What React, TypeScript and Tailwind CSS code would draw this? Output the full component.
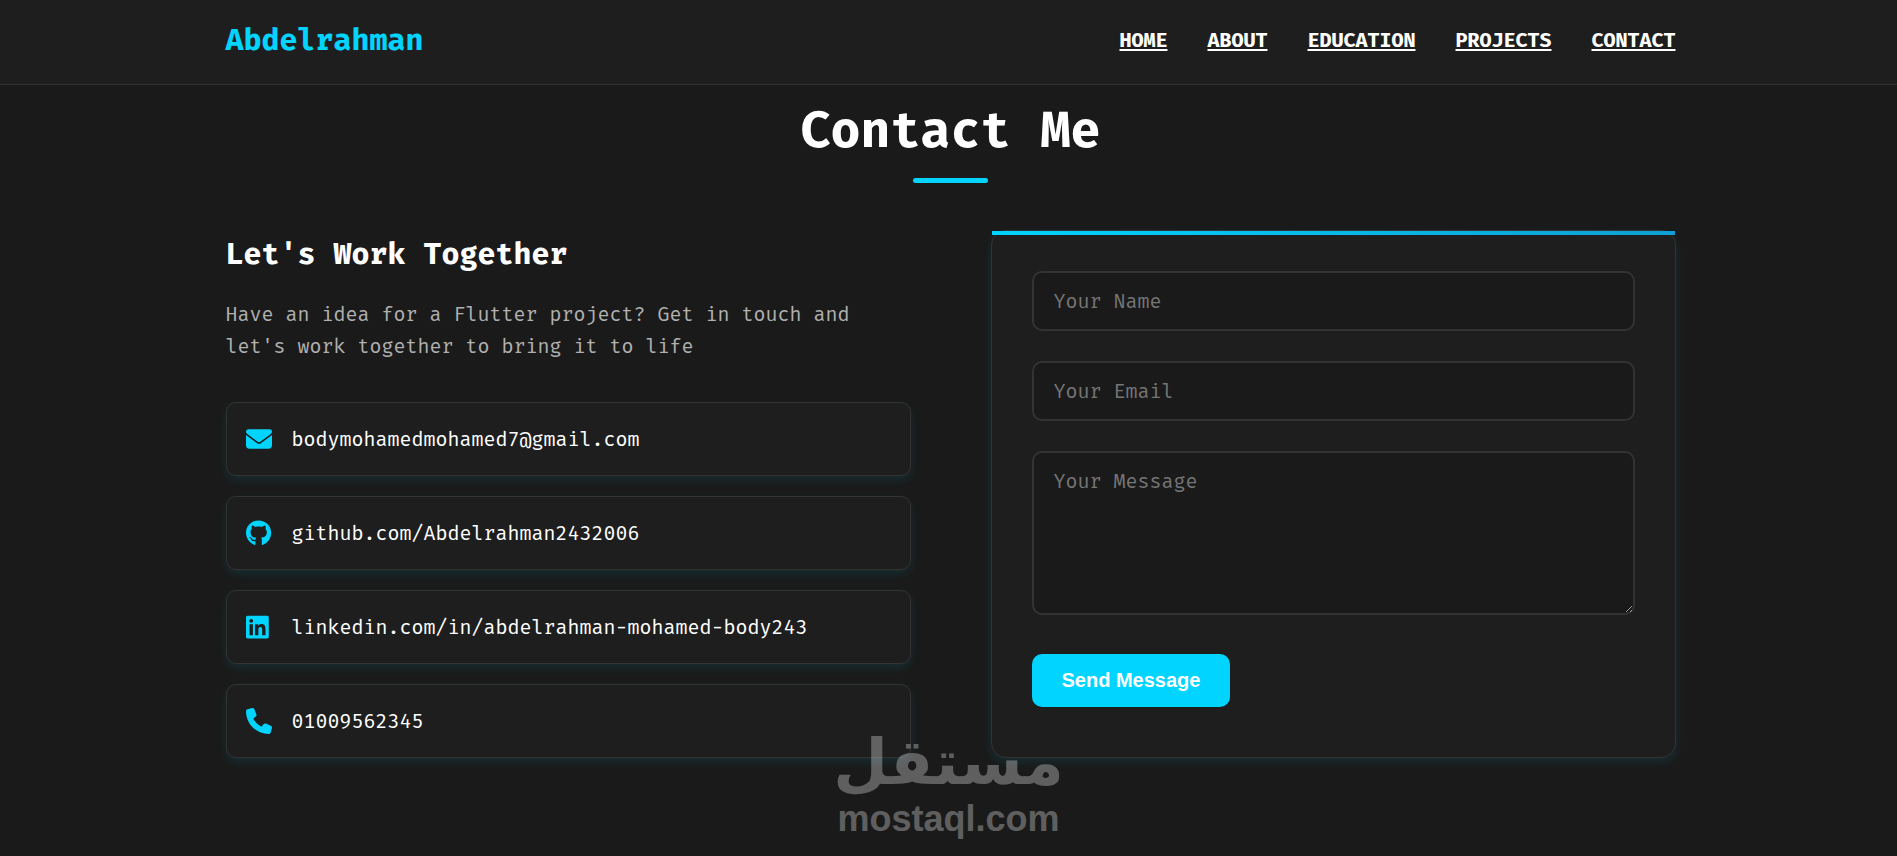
import { FaEnvelope, FaGithub, FaLinkedin, FaPhone } from "react-icons/fa6";

const navLinks = [
  { label: "HOME", href: "#home" },
  { label: "ABOUT", href: "#about" },
  { label: "EDUCATION", href: "#education" },
  { label: "PROJECTS", href: "#projects" },
  { label: "CONTACT", href: "#contact" },
];

const contacts = [
  { icon: FaEnvelope, label: "bodymohamedmohamed7@gmail.com", href: "mailto:bodymohamedmohamed7@gmail.com" },
  { icon: FaGithub, label: "github.com/Abdelrahman2432006", href: "https://github.com/Abdelrahman2432006" },
  { icon: FaLinkedin, label: "linkedin.com/in/abdelrahman-mohamed-body243", href: "https://linkedin.com/in/abdelrahman-mohamed-body243" },
  { icon: FaPhone, label: "01009562345", href: "tel:01009562345" },
];

const fieldClass =
  "block w-full rounded-[10px] border-2 border-[#333] bg-[#1a1a1a] px-5 py-3 text-[20px] leading-8 text-white outline-none placeholder:text-[#757575] focus:border-[#00d4ff]";

const Header = () => (
  <header className="border-b border-[#333] bg-[#1e1e1e] pt-4 pb-5 pl-1">
    <div className="mx-auto flex max-w-[1450px] items-center justify-between">
      <a href="#home" className="text-[30px] leading-[48px] font-bold text-[#00d4ff]">
        Abdelrahman
      </a>
      <nav className="flex gap-10">
        {navLinks.map((link) => (
          <a
            key={link.label}
            href={link.href}
            className="text-[20px] leading-8 font-semibold text-white underline decoration-2 underline-offset-2"
          >
            {link.label}
          </a>
        ))}
      </nav>
    </div>
  </header>
);

const ContactInfo = () => (
  <div>
    <h3 className="text-[30px] leading-[48px] font-semibold text-white">Let's Work Together</h3>
    <p className="mt-5 text-[20px] leading-8 text-[#b0b0b0]">
      Have an idea for a Flutter project? Get in touch and let's work together to bring it to life
    </p>

    <ul className="mt-10 flex flex-col gap-5">
      {contacts.map(({ icon: Icon, label, href }) => (
        <li key={label}>
          <a
            href={href}
            className="flex items-center gap-5 rounded-[10px] border border-[#333] bg-[#1e1e1e] px-[19px] py-5 text-[20px] leading-8 text-white shadow-[0_4px_10px_rgba(0,212,255,0.1)]"
          >
            <Icon preserveAspectRatio="xMinYMid meet" className="size-[26px] text-[#00d4ff]" />
            {label}
          </a>
        </li>
      ))}
    </ul>
  </div>
);

const ContactForm = () => (
  <form
    onSubmit={(e) => e.preventDefault()}
    className="relative flex flex-col items-start gap-[30px] rounded-[15px] border border-[#333] bg-[#1e1e1e] p-10 shadow-[0_4px_10px_rgba(0,212,255,0.1)]"
  >
    <div className="absolute inset-x-0 top-0 h-1 bg-linear-to-r from-[#00d4ff] to-[#0e9fd4]"></div>
    <input type="text" name="name" aria-label="Your Name" placeholder="Your Name" className={fieldClass} />
    <input type="email" name="email" aria-label="Your Email" placeholder="Your Email" className={fieldClass} />
    <textarea
      name="message"
      aria-label="Your Message"
      placeholder="Your Message"
      className={`${fieldClass} h-[164px] resize-y`}
    />
    <button
      type="submit"
      className="mt-[9px] rounded-[10px] bg-[#00d4ff] px-[30px] py-[15px] font-['Liberation_Sans',Arial,sans-serif] text-[20px] leading-[23px] font-bold text-white"
    >
      Send Message
    </button>
  </form>
);

const Watermark = () => (
  <div className="pointer-events-none absolute inset-x-0 bottom-[15px] flex flex-col items-center font-bold text-white opacity-30">
    <span lang="ar" dir="rtl" className="font-['DejaVu_Sans',sans-serif] text-[63px] leading-[70px]">
      مستقل
    </span>
    <span className="font-['Liberation_Sans',Arial,sans-serif] text-[36px] leading-[42px]">mostaql.com</span>
  </div>
);

const App = () => {
  return (
    <div className="min-h-screen bg-[#1a1a1a] font-['Fira_Mono','Fira_Code','DejaVu_Sans_Mono',monospace]">
      <Header />
      <section id="contact" className="relative pt-[5px] pb-[97px] pl-1">
        <h2 className="text-center text-[50px] leading-[80px] font-bold text-white">Contact Me</h2>
        <div className="mx-auto mt-2 h-[5px] w-[75px] rounded-full bg-[#00d4ff]"></div>

        <div className="mx-auto mt-[47px] grid max-w-[1450px] grid-cols-2 gap-20">
          <ContactInfo />
          <ContactForm />
        </div>

        <Watermark />
      </section>
    </div>
  );
};

export default App;
